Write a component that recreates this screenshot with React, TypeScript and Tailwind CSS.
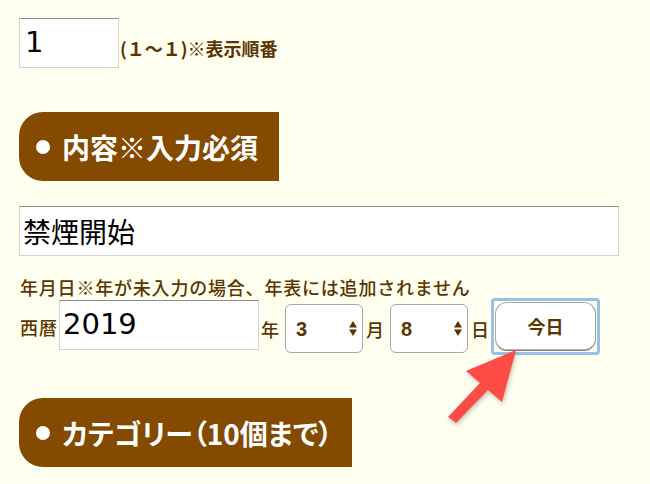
import React from "react";

const jp = "font-['Noto_Sans_CJK_JP','Noto_Sans',sans-serif]";

const Heading: React.FC<{ text: string; w: string; extra?: string }> = ({ text, w, extra = "" }) => (
  <div
    className={`${w} h-[69px] bg-[#844a00] rounded-l-[24px] flex items-center pl-[17px] text-white text-[28px] font-bold leading-none ${jp} ${extra}`}
  >
    <span className="inline-block w-[14px] h-[14px] rounded-full bg-white mr-[12px] shrink-0" />
    <span className="whitespace-nowrap">{text}</span>
  </div>
);

const FakeSelect: React.FC<{ value: string }> = ({ value }) => (
  <div className="w-[78px] h-[49px] mt-[4px] bg-white border border-[#a8a8a8] rounded-[6px] flex items-center justify-between pl-[10px] pr-[5px]">
    <span className="text-[20px] font-bold text-[#5c3400] font-['Liberation_Sans',sans-serif]">
      {value}
    </span>
    {/* 上下矢印 */}
    <svg width="8" height="17" viewBox="0 0 8 17">
      <path d="M4 1 L8 7.5 L0 7.5 Z" fill="#5c3400" />
      <path d="M0 9.5 L8 9.5 L4 16 Z" fill="#5c3400" />
    </svg>
  </div>
);

export default function App() {
  return (
    <div className={`relative w-[650px] h-[484px] overflow-hidden bg-[#fffff0] pl-[19px] pt-[18px] text-[#5c3400] ${jp}`}>
      {/* 表示順番 */}
      <div className="flex items-end">
        <div className="w-[100px] h-[50px] bg-white border border-[#d2d2d2] border-t-[#8c8c8c] flex items-center pl-[5px] text-[29px] text-black font-['DejaVu_Sans',sans-serif]">
          1
        </div>
        <span className="ml-[1px] mb-[6px] text-[18px] font-bold whitespace-nowrap">
          (１～１)※表示順番
        </span>
      </div>

      <div className="mt-[44px]">
        <Heading text="内容※入力必須" w="w-[260px]" />
      </div>

      {/* 内容 */}
      <div className="mt-[25px] w-[600px] h-[50px] bg-white border border-[#d2d2d2] border-t-[#8c8c8c] flex items-center pl-[3px] text-[28px] text-black">
        禁煙開始
      </div>

      <div className="mt-[20px] text-[18px] leading-[22px] font-medium ml-[1px] tracking-[0.8px] whitespace-nowrap">
        年月日※年が未入力の場合、年表には追加されません
      </div>

      {/* 日付 */}
      <div className="flex items-start mt-[2px] h-[56px]">
        <span className="text-[18px] font-medium ml-[1px] w-[39px] mt-[14px] tracking-[1px]">西暦</span>
        <div className="w-[200px] h-[50px] bg-white border border-[#d2d2d2] border-t-[#8c8c8c] flex items-center pl-[3px] text-[29px] text-black font-['DejaVu_Sans',sans-serif]">
          2019
        </div>
        <span className="text-[18px] font-medium ml-[2px] w-[24px] mt-[16px]">年</span>
        <FakeSelect value="3" />
        <span className="text-[18px] font-medium ml-[3px] w-[24px] mt-[16px]">月</span>
        <FakeSelect value="8" />
        <span className="text-[18px] font-medium ml-[3px] w-[20px] mt-[16px]">日</span>
        <div className="-mt-[2px] p-[1px] border-[3px] border-[#98c1ea] rounded-[4px]">
          <button className="w-[101px] h-[49px] bg-white border border-[#a9a9a9] border-b-[#777] border-r-[#999] rounded-[12px] text-[18px] font-bold text-[#5c3400] shadow-[inset_0_-1px_0_#bbb]">
            今日
          </button>
        </div>
      </div>

      <div className="mt-[42px]">
        <Heading text="カテゴリー（10個まで）" w="w-[333px]" extra="[font-feature-settings:'palt']" />
      </div>

      {/* 赤い矢印 */}
      <svg className="absolute left-0 top-0 pointer-events-none" width="650" height="484">
        <polygon
          points="516,350 466,371 480,383 448,417 456,423 488,390 502,402"
          fill="#ff4b45"
          style={{ filter: "drop-shadow(1px 2px 2px rgba(0,0,0,0.25))" }}
        />
      </svg>
    </div>
  );
}
